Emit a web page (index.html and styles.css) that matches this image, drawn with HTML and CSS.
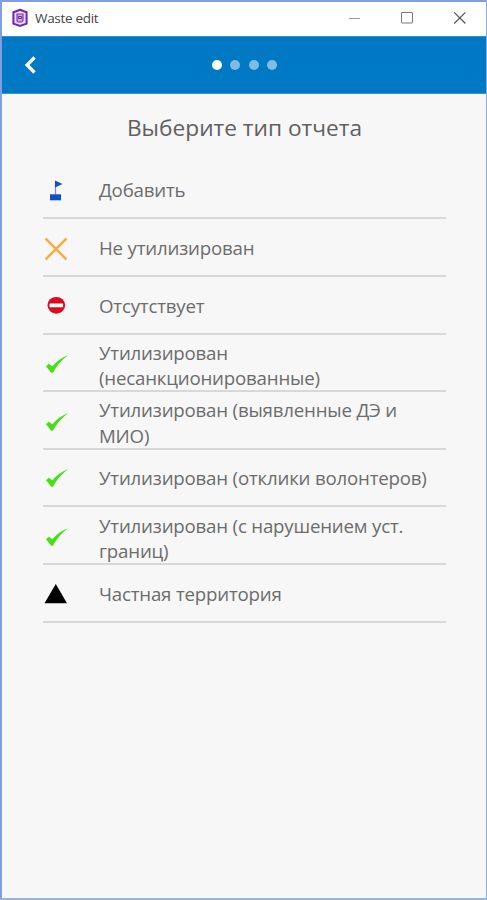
FILE: index.html
```html
<!DOCTYPE html>
<html lang="ru">
<head>
<meta charset="utf-8">
<title>Waste edit</title>
<link rel="stylesheet" href="styles.css">
</head>
<body>
<div class="window">
  <header class="titlebar">
    <svg class="app-icon" width="16" height="20" viewBox="0 0 16 20"><path d="M8 1.800 14.600 4.200v11.400L8 18 1.400 15.600V4.200z" fill="#eadcf5" stroke="#7421b0" stroke-width="2"/><path d="M5 6h6v6.500l-1.500 1.500H6L5 13z" fill="#c9a8e3" stroke="#7b3bb0" stroke-width="1.200"/><path d="M6.500 8.500h3v2h-3z" fill="none" stroke="#6a2a9c"/></svg>
    <span class="app-name">Waste edit</span>
    <svg class="controls" width="120" height="16" viewBox="0 0 120 16" fill="none"><path d="M3 8.500h11" stroke="#9a9a9a"/><rect x="55.500" y="2.500" width="11" height="10.500" rx=".5" stroke="#777"/><path d="m108.200 2.300 11.200 11.200m0-11.200-11.200 11.200" stroke="#555" stroke-width="1.200"/></svg>
  </header>
  <nav class="toolbar">
    <svg class="back" width="12" height="18" viewBox="0 0 12 18"><path d="M10.500 1.500 3.100 9l7.400 7.500" fill="none" stroke="#fff" stroke-width="3.300"/></svg>
    <div class="dots"><i class="dot active"></i><i class="dot"></i><i class="dot"></i><i class="dot"></i></div>
  </nav>
  <main>
    <h1>Выберите тип отчета</h1>
    <ul class="list">
      <li><svg class="icon" width="26" height="26" viewBox="0 0 26 26"><path d="M12.500 3v13.500" stroke="#7893c9" stroke-width="1.300"/><path d="M12 2.500 19.500 6 12 9.500z" fill="#1450c4"/><rect x="7" y="16.300" width="11" height="6" fill="#0b4fcb"/></svg><span>Добавить</span></li>
      <li><svg class="icon" width="26" height="26" viewBox="0 0 26 26"><path d="m2.500 2.500 21 21m0-21-21 21" stroke="#f2b04b" stroke-width="2.500"/></svg><span>Не утилизирован</span></li>
      <li><svg class="icon" width="26" height="26" viewBox="0 0 26 26"><ellipse cx="13.300" cy="12.300" rx="8.800" ry="8.400" fill="#db0a1c"/><rect x="6.500" y="10.500" width="13.600" height="3.700" rx=".5" fill="#fff"/></svg><span>Отсутствует</span></li>
      <li><svg class="icon" width="26" height="26" viewBox="0 0 26 26"><path d="M3 15.200 5.700 12.700 9.400 15.300C13.600 10.200 18.500 6.500 25 4.300 18.500 9 14 14.500 9.900 21.700H8.200z" fill="#46e015"/></svg><span class="wrapped">Утилизирован (несанкционированные)</span></li>
      <li><svg class="icon" width="26" height="26" viewBox="0 0 26 26"><path d="M3 15.200 5.700 12.700 9.400 15.300C13.600 10.200 18.500 6.500 25 4.300 18.500 9 14 14.500 9.900 21.700H8.200z" fill="#46e015"/></svg><span class="wrapped">Утилизирован (выявленные ДЭ и МИО)</span></li>
      <li><svg class="icon raised" width="26" height="26" viewBox="0 0 26 26"><path d="M3 15.200 5.700 12.700 9.400 15.300C13.600 10.200 18.500 6.500 25 4.300 18.500 9 14 14.500 9.900 21.700H8.200z" fill="#46e015"/></svg><span>Утилизирован (отклики волонтеров)</span></li>
      <li><svg class="icon lowered" width="26" height="26" viewBox="0 0 26 26"><path d="M3 15.200 5.700 12.700 9.400 15.300C13.600 10.200 18.500 6.500 25 4.300 18.500 9 14 14.500 9.900 21.700H8.200z" fill="#46e015"/></svg><span class="wrapped">Утилизирован (с нарушением уст. границ)</span></li>
      <li><svg class="icon" width="26" height="26" viewBox="0 0 26 26"><path d="M12.800 3 24 22.300H1.500z" fill="#000"/></svg><span>Частная территория</span></li>
    </ul>
  </main>
</div>
</body>
</html>
```
FILE: styles.css
```css
* { box-sizing: border-box; }
body { margin: 0; }
.window {
  height: 900px;
  border: 2px solid #7f9fe0;
  border-right: 1px solid #82b0e6;
  border-bottom-color: #94b6e4;
  background: #f7f7f7;
  font-family: "Open Sans", "Noto Sans", sans-serif;
  color: #6c6c6c;
}
.titlebar {
  display: flex;
  align-items: center;
  height: 34px;
  padding: 0 20px 2px 10px;
  background: #fff;
}
.app-name {
  margin-left: 7px;
  font-size: 13.5px;
  letter-spacing: -.3px;
  color: #444;
}
.controls { margin-left: auto; }
.toolbar {
  display: grid;
  grid-template-columns: 1fr auto 1fr;
  align-items: center;
  height: 58px;
  padding: 0 21px 0 22px;
  background: #0079c4;
  border-top: 1px solid #3a8bd5;
  border-bottom: 1px solid #3a93cf;
}
.dots { display: flex; gap: 8.500px; }
.dot { width: 10px; height: 10px; border-radius: 50%; background: #80bce1; }
.dot.active { background: #fff; }
h1 {
  margin: 0;
  height: 67.900px;
  padding-left: 1px;
  line-height: 68px;
  font-size: 22.700px;
  font-weight: 400;
  text-align: center;
  color: #606060;
}
.list {
  margin: 0 40px 0 41px;
  padding: 0;
  list-style: none;
}
.list li {
  display: flex;
  align-items: center;
  height: 57.600px;
  padding-top: 3px;
  border-bottom: 2px solid #d8d8d8;
  font-size: 18.700px;
  letter-spacing: -.2px;
  line-height: 25.500px;
}
.icon { flex: none; margin-right: 30px; }
.icon.raised { margin-top: -2px; }
.icon.lowered { margin-top: 1px; }
.list span { margin-top: -2px; }
.list .wrapped { margin-top: 2.500px; }
```
